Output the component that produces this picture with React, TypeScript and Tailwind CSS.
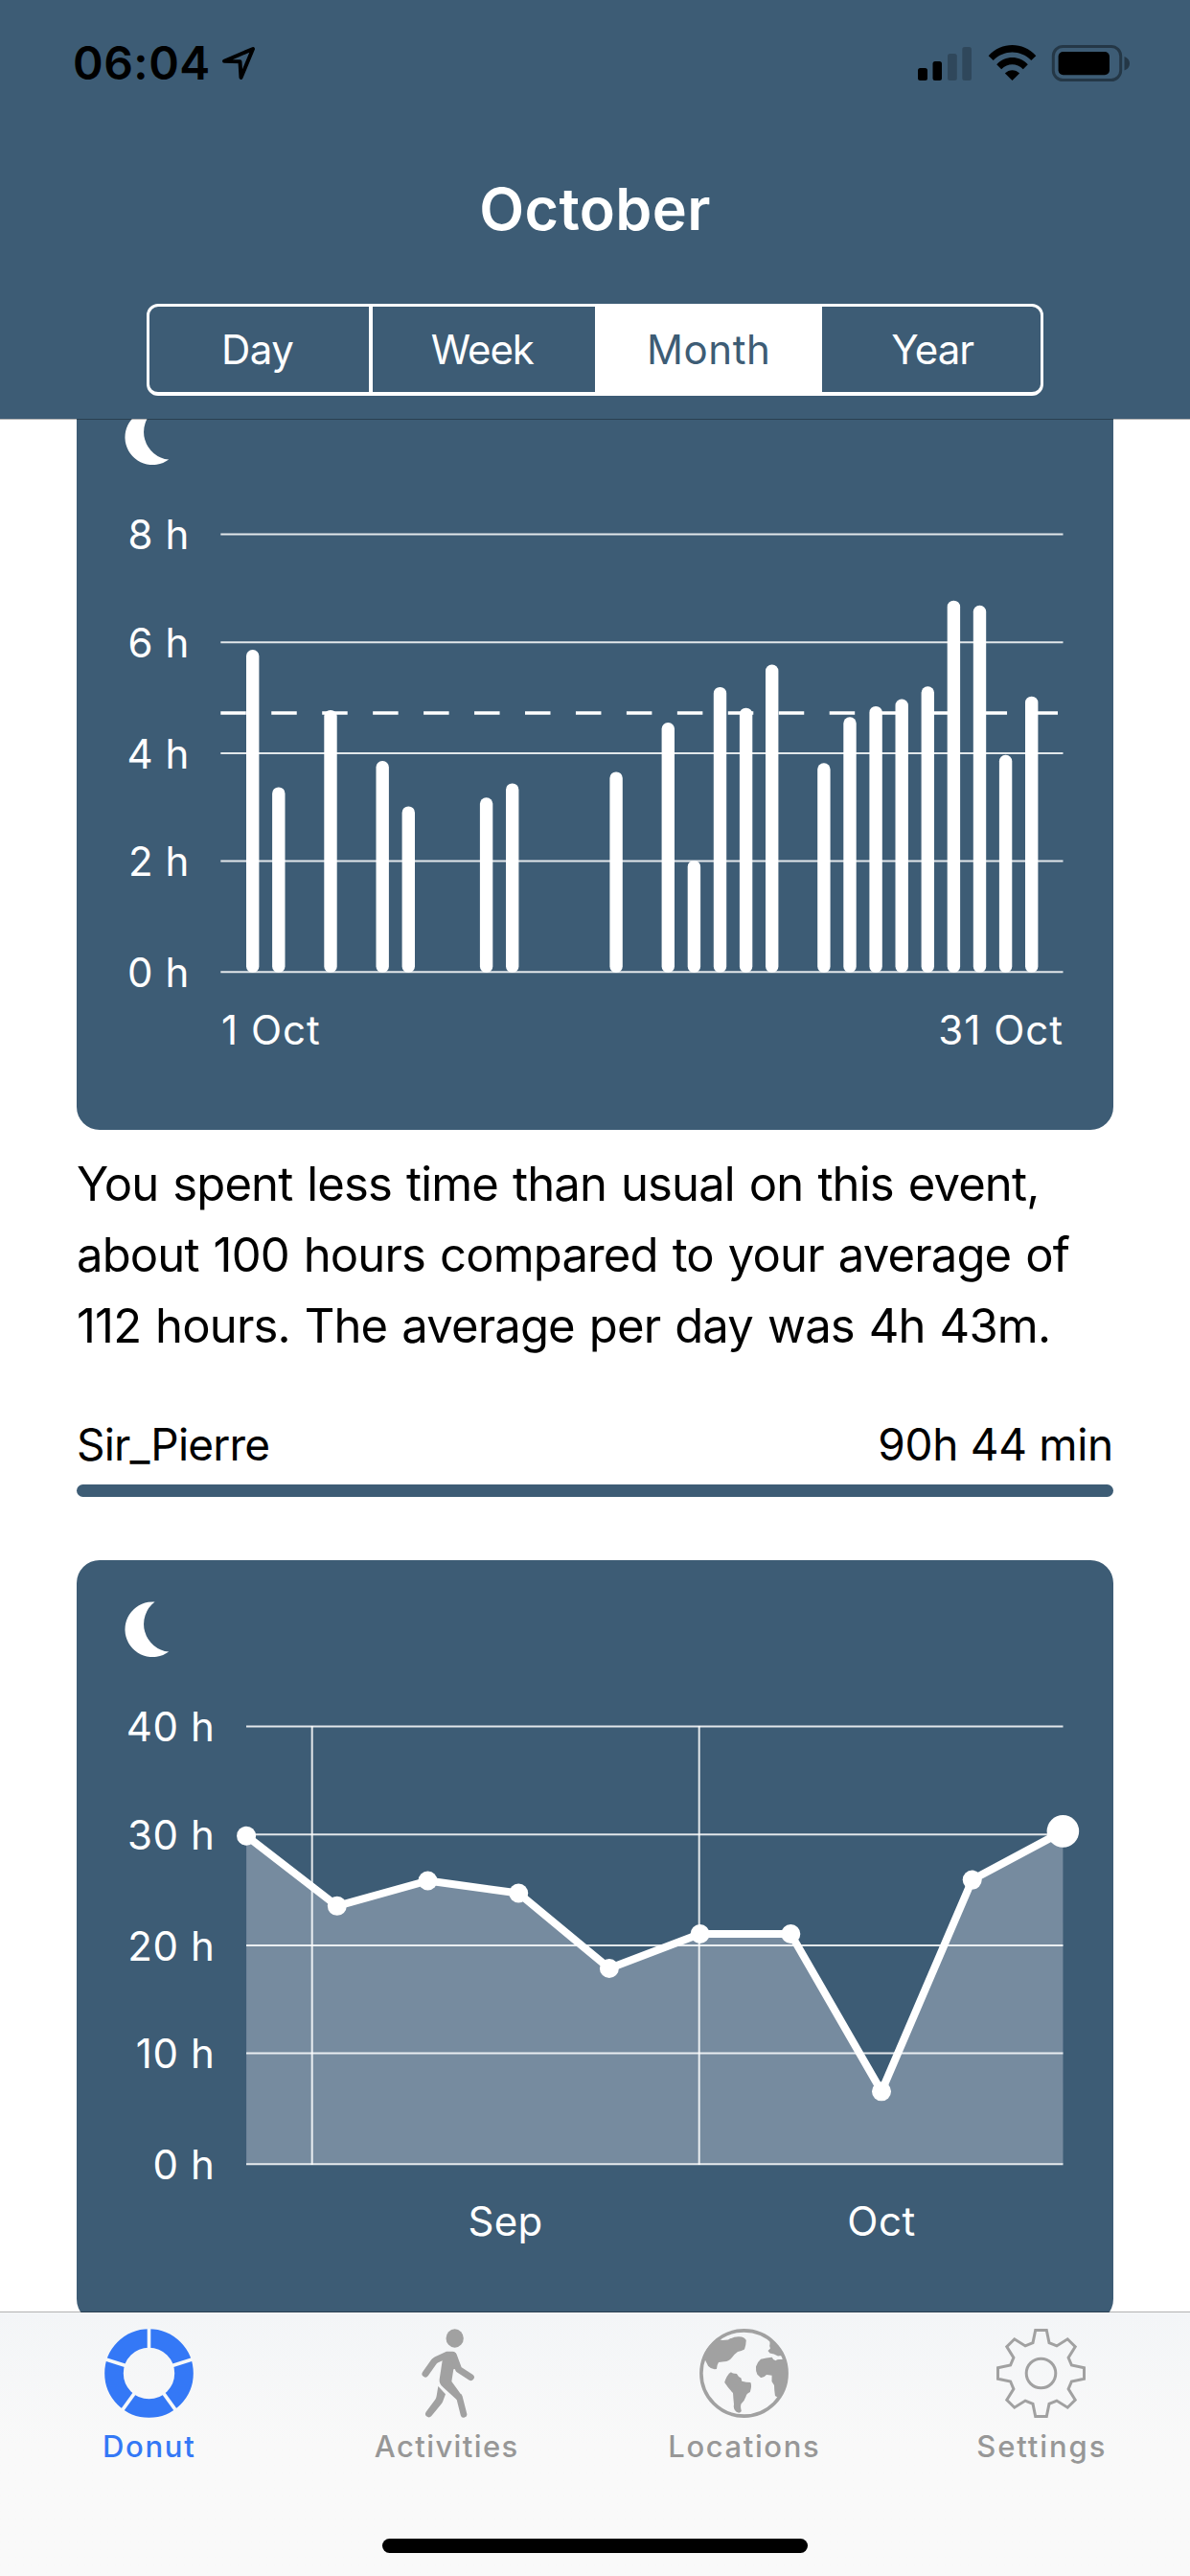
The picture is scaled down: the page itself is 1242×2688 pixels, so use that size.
import React from 'react';
import clsx from 'clsx';

interface DayValue {
  day: number;
  hours: number;
}

interface TabItem {
  label: string;
  icon: React.ReactNode;
  tracking: string;
}

const nights: DayValue[] = [
  { day: 1, hours: 5.9 },
  { day: 2, hours: 3.39 },
  { day: 4, hours: 4.8 },
  { day: 6, hours: 3.87 },
  { day: 7, hours: 3.04 },
  { day: 10, hours: 3.2 },
  { day: 11, hours: 3.46 },
  { day: 15, hours: 3.67 },
  { day: 17, hours: 4.57 },
  { day: 18, hours: 2.05 },
  { day: 19, hours: 5.22 },
  { day: 20, hours: 4.84 },
  { day: 21, hours: 5.63 },
  { day: 23, hours: 3.83 },
  { day: 24, hours: 4.67 },
  { day: 25, hours: 4.87 },
  { day: 26, hours: 5.0 },
  { day: 27, hours: 5.23 },
  { day: 28, hours: 6.8 },
  { day: 29, hours: 6.71 },
  { day: 30, hours: 3.98 },
  { day: 31, hours: 5.05 },
];

const weeks = [29.96, 23.55, 25.86, 24.72, 17.85, 21, 21, 6.61, 25.94, 30.38];

const segments = [
  { label: 'Day', width: 'w-[234px] pr-[3px]', tracking: 'tracking-[-0.5px]' },
  { label: 'Week', width: 'w-[234px] pr-[3px]', tracking: 'tracking-[-1px]' },
  { label: 'Month', width: 'w-[239px]', tracking: 'tracking-[0.6px]' },
  { label: 'Year', width: 'w-[229px] pl-[2px]', tracking: 'tracking-[-0.9px]' },
];

// Vertical position of the five grid lines, top to bottom
const GRID_Y = [71.5, 184.2, 300, 412.5, 528.3];

const MoonIcon = () => (
  <svg width="47" height="59" viewBox="0 0 47 59" fill="white">
    <path d="M31.6 0.6 A28.8 28.8 0 1 0 46.2 52.6 A29 29 0 0 1 31.6 0.6 Z" />
  </svg>
);

interface GridProps {
  left: number;
  labelX: number;
  labels: string[];
}

const Grid: React.FC<GridProps> = ({ left, labelX, labels }) => (
  <>
    {labels.map((label, i) => (
      <g key={label}>
        <line x1={left} x2={1029.5} y1={GRID_Y[i]} y2={GRID_Y[i]} stroke="white" strokeOpacity={0.85} strokeWidth={2} />
        <text x={labelX} y={GRID_Y[i] + 15.6} textAnchor="end" fill="white" className="text-[42px] tracking-[0.6px]">
          {label}
        </text>
      </g>
    ))}
  </>
);

const MonthBars = () => {
  const baseline = 529;
  return (
    <svg width="1082" height="693" viewBox="0 0 1082 693">
      <Grid left={150.3} labelX={118} labels={['8 h', '6 h', '4 h', '2 h', '0 h']} />
      <line x1={150.3} x2={1029.5} y1={258} y2={258} stroke="white" strokeWidth={3.4} strokeDasharray="26.5 26.45" />
      {nights.map(({ day, hours }) => (
        <rect
          key={day}
          x={177 + (day - 1) * 27.1}
          y={baseline - hours * 57.1}
          width={13.4}
          height={hours * 57.1}
          rx={6.5}
          fill="white"
        />
      ))}
      <text x={151} y={603.7} fill="white" className="text-[42px] tracking-[1px]">1 Oct</text>
      <text x={1030} y={603.7} textAnchor="end" fill="white" className="text-[42px] tracking-[1px]">31 Oct</text>
    </svg>
  );
};

const WeekTrend = () => {
  const points = weeks.map((hours, i) => [177.1 + i * 94.7, 527.8 - hours * 11.42]);
  const line = points.map(([x, y]) => `${x},${y}`).join(' ');
  return (
    <svg width="1082" height="693" viewBox="0 0 1082 693">
      <polygon points={`177.1,528 ${line} 1029.5,528`} fill="#768b9f" />
      <Grid left={177} labelX={144.5} labels={['40 h', '30 h', '20 h', '10 h', '0 h']} />
      {[245.7, 649.7].map((x) => (
        <line key={x} x1={x} x2={x} y1={71} y2={529} stroke="white" strokeOpacity={0.85} strokeWidth={2} />
      ))}
      <polyline points={line} fill="none" stroke="white" strokeWidth={8} strokeLinejoin="round" />
      {points.map(([x, y], i) => (
        <circle key={x} cx={x} cy={y} r={i === points.length - 1 ? 16.8 : 10} fill="white" />
      ))}
      <text x={447.5} y={603.2} textAnchor="middle" fill="white" className="text-[42px] tracking-[0.3px]">Sep</text>
      <text x={840} y={603.2} textAnchor="middle" fill="white" className="text-[42px] tracking-[0.6px]">Oct</text>
    </svg>
  );
};

const ChartCard: React.FC<{ children: React.ReactNode }> = ({ children }) => (
  <section className="h-[795px] w-full shrink-0 overflow-hidden rounded-3xl bg-[#3d5c75] pt-[43px]">
    <div className="pl-[50px]">
      <MoonIcon />
    </div>
    {children}
  </section>
);

const StatusBar = () => (
  <div className="flex h-[132px] w-full items-start justify-between pt-[38px] pr-[62px] pl-[76px]">
    <div className="flex items-start">
      <span className="text-[48px] leading-[56px] font-semibold tracking-[0.5px] text-black">06:04</span>
      <svg className="mt-[10px] ml-[11px]" width="36" height="36" viewBox="0 0 36 36" fill="none" stroke="black" strokeWidth="4" strokeLinejoin="round">
        <path d="M3 15.8 L33 3 L20.5 33 L19.5 16.3 Z" />
      </svg>
    </div>
    <div className="mt-[9px] flex items-start">
      <svg width="56" height="38" viewBox="0 0 56 38">
        <rect x="0" y="24" width="10" height="13" rx="2.5" />
        <rect x="15.5" y="17" width="9.5" height="20" rx="2.5" />
        <rect x="31" y="9" width="9.8" height="28" rx="2.5" fillOpacity="0.22" />
        <rect x="46.3" y="2" width="9.7" height="35" rx="2.5" fillOpacity="0.22" />
      </svg>
      <svg className="ml-[17px]" width="51" height="38" viewBox="0 0 51 38">
        <path d="M0.7 11.2 C14.5 -3.7 36.5 -3.7 50.3 11.2 L45.3 16 C34.3 4.6 16.7 4.6 5.7 16 Z" />
        <path d="M9.2 20.3 C18.5 10.6 32.5 10.6 41.8 20.3 L36.8 25.2 C30.3 18.7 20.7 18.7 14.2 25.2 Z" />
        <path d="M17.9 29.6 C22 25.1 29 25.1 33.1 29.6 L25.5 36.9 Z" />
      </svg>
      <svg className="ml-[15px]" width="83" height="38" viewBox="0 0 83 38">
        <rect x="2.3" y="1.5" width="70.4" height="35" rx="10" fill="none" stroke="black" strokeOpacity="0.4" strokeWidth="3" />
        <rect x="7.6" y="7" width="53.4" height="24.3" rx="5" />
        <path d="M76.5 12 C80.8 14 82 16.5 82 19.2 C82 22 80.8 24.6 76.5 26.6 Z" fillOpacity="0.4" />
      </svg>
    </div>
  </div>
);

const SegmentedControl = ({ active }: { active: string }) => (
  <div className="flex h-24 w-[936px] overflow-hidden rounded-xl border-3 border-b-4 border-white">
    {segments.map(({ label, width, tracking }, i) => (
      <button
        key={label}
        type="button"
        className={clsx(
          'flex h-full items-center justify-center pb-px text-[42px]',
          width,
          tracking,
          i === 0 && 'border-r-4 border-white',
          label === active ? 'bg-white text-[#3d5c75]' : 'text-white'
        )}
      >
        {label}
      </button>
    ))}
  </div>
);

const DonutIcon = () => (
  <svg width="93" height="93" viewBox="-46.5 -46.5 93 93">
    <circle r="36.5" fill="none" stroke="#3478f6" strokeWidth="19.6" />
    {[0, 72, 144, 216, 288].map((angle) => (
      <line key={angle} x1="0" y1="-24" x2="0" y2="-48" stroke="#f6f8f9" strokeWidth="3.6" transform={`rotate(${angle})`} />
    ))}
  </svg>
);

const WalkIcon = () => (
  <svg className="ml-1" width="56" height="93" viewBox="0 0 168 279" fill="#a1a1a1" stroke="#a1a1a1" strokeLinecap="round" strokeLinejoin="round">
    <ellipse cx="104" cy="30" rx="27.5" ry="29" stroke="none" />
    <path d="M78 71 H97 Q107 71 109 82 L122 124 L100 127 L94 165 L118 198 Q124 206 127 216 L110 222 L68 184 Q54 172 56 158 L65 100 L46 109 L32 96 Q36 92 42 88 Z" stroke="none" />
    <path d="M39 103 L12 141" strokeWidth="21" fill="none" />
    <path d="M100 84 L116 127 L154 152" strokeWidth="21" fill="none" />
    <path d="M118 213 L132 268" strokeWidth="20" fill="none" />
    <path d="M52 180 L75 205 L66 229 Q64 233 60 238 L31 273 Q24 281 15 274 Q9 268 14 260 L43 221 Q46 216 47 210 Z" stroke="none" />
  </svg>
);

const GlobeIcon = () => (
  <svg width="93" height="93" viewBox="0 0 93 93" fill="#a1a1a1">
    <circle cx="46.5" cy="46.5" r="44.6" fill="none" stroke="#a1a1a1" strokeWidth="3.6" />
    <path d="M18 10.5 L24 12 L30 11.5 Q36 8 41.5 8.3 Q47 8.5 48.8 12 Q48.5 18 47 21.5 Q44 23 40 24 Q37 26 34 30 Q30 34.5 26 34.3 L20 35 Q18 38 18 42 L15.7 42.3 Q12 42 9.2 39 L4 28.7 Q7.9 18 18 10.5 Z" />
    <path d="M33 45.3 Q34.5 47 38.9 47 Q41 51 43.5 51.5 L44.3 54.7 Q49 56 53.3 56 Q55 59 52.9 66 Q49 67.5 48.4 71 Q47 75.5 43.5 78.5 Q42.5 81 43.8 86 Q42 89 38.2 86.5 Q35 84 36 79 Q35.4 73 35 67 Q30 62 26.2 56 Q27 53 28.6 50 Q31 46 33 45.3 Z" />
    <path d="M59 39.5 Q61 34 64 31.7 Q70 30.5 75.7 29.8 Q77 33 79.5 33.3 Q81 32 83 32 L89.5 32 L92 46 Q91 62 83 72.5 L79 70 Q78 64 78 59 L75.5 55 L75.6 48.7 Q72 48 70 48 Q67 51.5 64 51 L60.4 47.7 Q58.5 44 59 39.5 Z" />
    <path d="M73.5 11 L81 17 L87 24.5 L90 31.5 L86.5 30 L85.5 28 L82 28.5 Q78 26 73.5 25.5 L71.5 23 L74 20.5 Q72.5 18.5 73.5 16 Z" />
  </svg>
);

const GearIcon = () => (
  <svg width="93" height="93" viewBox="0 0 93 93" fill="none" stroke="#a1a1a1" strokeWidth="3">
    <path d="M40.7 1.5 H52.3 L55 14.6 L62.9 17.9 L74.2 10.8 L82.2 18.8 L75.1 30.1 L78.4 38 L91.5 40.7 V52.3 L78.4 55 L75.1 62.9 L82.2 74.2 L74.2 82.2 L62.9 75.1 L55 78.4 L52.3 91.5 H40.7 L38 78.4 L30.1 75.1 L18.8 82.2 L10.8 74.2 L17.9 62.9 L14.6 55 L1.5 52.3 V40.7 L14.6 38 L17.9 30.1 L10.8 18.8 L18.8 10.8 L30.1 17.9 L38 14.6 Z" />
    <circle cx="46.5" cy="46.5" r="15.3" />
  </svg>
);

const tabs: TabItem[] = [
  { label: 'Donut', icon: <DonutIcon />, tracking: 'tracking-[1.7px]' },
  { label: 'Activities', icon: <WalkIcon />, tracking: 'tracking-[1.4px]' },
  { label: 'Locations', icon: <GlobeIcon />, tracking: 'tracking-[1.6px]' },
  { label: 'Settings', icon: <GearIcon />, tracking: 'tracking-[1.9px]' },
];

const TabBar = ({ active }: { active: string }) => (
  <nav className="relative z-10 flex h-[275px] shrink-0 flex-col items-center bg-linear-to-b from-[#f3f5f7] via-[#f9f9f9] to-[#f9f9f9] shadow-[0_-1px_0_rgba(0,0,0,0.3)]">
    <div className="grid w-full grid-cols-4 pt-[17px]">
      {tabs.map(({ label, icon, tracking }) => (
        <div key={label} className="flex flex-col items-center">
          {icon}
          <span
            className={clsx(
              'mt-3 pl-px text-[31px] leading-[36px] font-medium',
              tracking,
              label === active ? 'text-[#3478f6]' : 'text-[#979797]'
            )}
          >
            {label}
          </span>
        </div>
      ))}
    </div>
    {/* Home indicator */}
    <div className="mt-[78px] h-[15px] w-[444px] rounded-full bg-black" />
  </nav>
);

export default function App() {
  return (
    <div className="flex h-[2688px] w-[1242px] flex-col overflow-hidden bg-white font-['Inter','Liberation_Sans',sans-serif]">
      <header className="relative z-10 flex h-[437px] shrink-0 flex-col items-center bg-[#3d5c75] shadow-[0_1px_0_rgba(0,0,0,0.3)]">
        <StatusBar />
        <h1 className="mt-[50px] text-[61px] leading-[72px] font-semibold tracking-[0.4px] text-white">October</h1>
        <div className="mt-[63px]">
          <SegmentedControl active="Month" />
        </div>
      </header>

      <main className="flex min-h-0 flex-1 flex-col overflow-hidden px-20">
        {/* First card is scrolled partly under the header */}
        <div className="-mt-[53px] flex flex-col">
          <ChartCard>
            <MonthBars />
          </ChartCard>
          <p className="mt-5 text-[49px] leading-[74px] tracking-[-0.85px] [word-spacing:2px] whitespace-nowrap text-black">
            You spent less time than usual on this event,
            <br />
            about 100 hours compared to your average of
            <br />
            112 hours. The average per day was 4h 43m.
          </p>
          <div className="mt-[58px] flex justify-between text-[46px] leading-[56px] text-black">
            <span className="tracking-[-0.8px]">Sir_Pierre</span>
            <span className="tracking-[-0.3px]">90h 44 min</span>
          </div>
          <div className="mt-[14px] mb-[66px] h-[13px] rounded-full bg-[#3d5c75]" />
          <ChartCard>
            <WeekTrend />
          </ChartCard>
        </div>
      </main>

      <TabBar active="Donut" />
    </div>
  );
}
